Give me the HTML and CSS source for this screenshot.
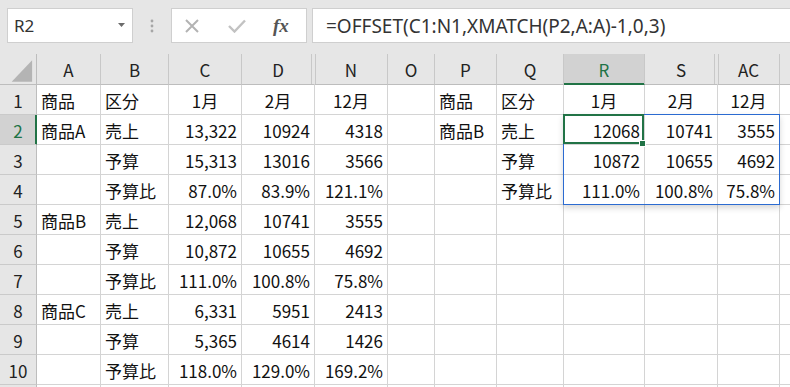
FILE: index.html
```html
<!DOCTYPE html>
<html lang="ja">
<head>
  <meta charset="UTF-8" />
  <title>OFFSET XMATCH</title>
  <link rel="stylesheet" href="styles.css">
</head>
<body>

  <!-- Formula bar -->
  <div class="toolbar">
    <div class="namebox">
      <span>R2</span>
      <svg class="caret" width="7" height="4" viewBox="0 0 7 4"><polygon points="0,0 7,0 3.5,4" fill="#6b6b6b"/></svg>
    </div>
    <svg class="grip" width="4" height="14" viewBox="0 0 4 14">
      <circle cx="2" cy="2" r="1.4" fill="#a6a6a6"/>
      <circle cx="2" cy="7" r="1.4" fill="#a6a6a6"/>
      <circle cx="2" cy="12" r="1.4" fill="#a6a6a6"/>
    </svg>
    <div class="fxbox">
      <svg width="16" height="14" viewBox="0 0 16 14"><path d="M2 1 L14 13 M14 1 L2 13" stroke="#b3b3b3" stroke-width="2" fill="none"/></svg>
      <svg width="18" height="14" viewBox="0 0 18 14"><path d="M1 7 L6.5 12.5 L17 1.5" stroke="#c2c2c2" stroke-width="2.4" fill="none"/></svg>
      <span class="fx">fx</span>
    </div>
    <div class="formula">=OFFSET(C1:N1,XMATCH(P2,A:A)-1,0,3)</div>
  </div>

  <!-- Sheet -->
  <div class="sheet">
    <div class="hd corner"><svg width="37" height="30" viewBox="0 0 37 30"><polygon points="33,6 33,28 12,28" fill="#b4b4b4"/></svg></div>
    <div class="hd">A</div>
    <div class="hd">B</div>
    <div class="hd">C</div>
    <div class="hd hid-l">D</div>
    <div class="hd hid-r">N</div>
    <div class="hd">O</div>
    <div class="hd">P</div>
    <div class="hd">Q</div>
    <div class="hd sel">R</div>
    <div class="hd hid-l">S</div>
    <div class="hd hid-r">AC</div>
    <div class="hd"></div>

    <!-- row 1 -->
    <div class="rh">1</div>
    <div class="c">商品</div>
    <div class="c">区分</div>
    <div class="c ctr">1月</div>
    <div class="c ctr">2月</div>
    <div class="c ctr">12月</div>
    <div class="c"></div>
    <div class="c">商品</div>
    <div class="c">区分</div>
    <div class="c ctr">1月</div>
    <div class="c ctr">2月</div>
    <div class="c ctr">12月</div>
    <div class="c"></div>

    <!-- row 2 -->
    <div class="rh sel">2</div>
    <div class="c">商品A</div>
    <div class="c">売上</div>
    <div class="c num">13,322</div>
    <div class="c num">10924</div>
    <div class="c num">4318</div>
    <div class="c"></div>
    <div class="c">商品B</div>
    <div class="c">売上</div>
    <div class="c num current">
      12068
      <!-- spill range and active cell -->
      <div class="spill"></div>
      <div class="active"></div>
      <div class="handle"></div>
    </div>
    <div class="c num">10741</div>
    <div class="c num">3555</div>
    <div class="c"></div>

    <!-- row 3 -->
    <div class="rh">3</div>
    <div class="c"></div>
    <div class="c">予算</div>
    <div class="c num">15,313</div>
    <div class="c num">13016</div>
    <div class="c num">3566</div>
    <div class="c"></div>
    <div class="c"></div>
    <div class="c">予算</div>
    <div class="c num">10872</div>
    <div class="c num">10655</div>
    <div class="c num">4692</div>
    <div class="c"></div>

    <!-- row 4 -->
    <div class="rh">4</div>
    <div class="c"></div>
    <div class="c">予算比</div>
    <div class="c num">87.0%</div>
    <div class="c num">83.9%</div>
    <div class="c num">121.1%</div>
    <div class="c"></div>
    <div class="c"></div>
    <div class="c">予算比</div>
    <div class="c num">111.0%</div>
    <div class="c num">100.8%</div>
    <div class="c num">75.8%</div>
    <div class="c"></div>

    <!-- row 5 -->
    <div class="rh">5</div>
    <div class="c">商品B</div>
    <div class="c">売上</div>
    <div class="c num">12,068</div>
    <div class="c num">10741</div>
    <div class="c num">3555</div>
    <div class="c"></div><div class="c"></div><div class="c"></div><div class="c"></div><div class="c"></div><div class="c"></div><div class="c"></div>

    <!-- row 6 -->
    <div class="rh">6</div>
    <div class="c"></div>
    <div class="c">予算</div>
    <div class="c num">10,872</div>
    <div class="c num">10655</div>
    <div class="c num">4692</div>
    <div class="c"></div><div class="c"></div><div class="c"></div><div class="c"></div><div class="c"></div><div class="c"></div><div class="c"></div>

    <!-- row 7 -->
    <div class="rh">7</div>
    <div class="c"></div>
    <div class="c">予算比</div>
    <div class="c num">111.0%</div>
    <div class="c num">100.8%</div>
    <div class="c num">75.8%</div>
    <div class="c"></div><div class="c"></div><div class="c"></div><div class="c"></div><div class="c"></div><div class="c"></div><div class="c"></div>

    <!-- row 8 -->
    <div class="rh">8</div>
    <div class="c">商品C</div>
    <div class="c">売上</div>
    <div class="c num">6,331</div>
    <div class="c num">5951</div>
    <div class="c num">2413</div>
    <div class="c"></div><div class="c"></div><div class="c"></div><div class="c"></div><div class="c"></div><div class="c"></div><div class="c"></div>

    <!-- row 9 -->
    <div class="rh">9</div>
    <div class="c"></div>
    <div class="c">予算</div>
    <div class="c num">5,365</div>
    <div class="c num">4614</div>
    <div class="c num">1426</div>
    <div class="c"></div><div class="c"></div><div class="c"></div><div class="c"></div><div class="c"></div><div class="c"></div><div class="c"></div>

    <!-- row 10 -->
    <div class="rh">10</div>
    <div class="c"></div>
    <div class="c">予算比</div>
    <div class="c num">118.0%</div>
    <div class="c num">129.0%</div>
    <div class="c num">169.2%</div>
    <div class="c"></div><div class="c"></div><div class="c"></div><div class="c"></div><div class="c"></div><div class="c"></div><div class="c"></div>

    <!-- row 11, only its top edge shows -->
    <div class="rh"></div>
    <div class="c"></div><div class="c"></div><div class="c"></div><div class="c"></div><div class="c"></div><div class="c"></div>
    <div class="c"></div><div class="c"></div><div class="c"></div><div class="c"></div><div class="c"></div><div class="c"></div>
  </div>

</body>
</html>
```

FILE: styles.css
```css
* {
  box-sizing: border-box;
}
body {
  margin: 0;
  width: 790px;
  height: 387px;
  overflow: hidden;
  background: #e6e6e6;
  font-family: 'Noto Sans CJK JP', sans-serif;
  color: #111;
}

/* Formula bar */
.toolbar {
  display: flex;
  align-items: center;
  height: 35px;
  padding-left: 7px;
  margin: 8px 0 11px 0;
}
.toolbar > * {
  flex: none;
}
.namebox {
  width: 126px;
  height: 35px;
  display: flex;
  align-items: center;
  justify-content: space-between;
  padding: 0 7px 0 6px;
  background: #fff;
  border: 1px solid #cfcfcf;
  font-family: 'Noto Sans', sans-serif;
  font-size: 17px;
  color: #333;
}
.caret {
  margin-top: -2px;
}
.grip {
  margin: 0 17px;
}
.fxbox {
  width: 136px;
  height: 35px;
  display: flex;
  align-items: center;
  gap: 28px;
  padding-left: 12px;
  background: #fff;
  border: 1px solid #cfcfcf;
}
.fx {
  font-family: 'Liberation Serif', serif;
  font-style: italic;
  font-weight: bold;
  font-size: 19px;
  color: #555;
  margin-left: -1px;
}
.formula {
  width: 500px;
  height: 35px;
  margin-left: 5px;
  display: flex;
  align-items: center;
  padding-left: 13px;
  background: #fff;
  border: 1px solid #cfcfcf;
  font-family: 'Noto Sans', sans-serif;
  font-size: 19px;
  color: #333;
  white-space: nowrap;
}

/* Sheet grid */
.sheet {
  display: grid;
  grid-template-columns: 37px 64px 68px 73px 73px 73px 47px 62px 67px 81px 73px 62px 73px;
  grid-template-rows: 31px repeat(11, 30px);
  font-size: 17px;
}
.hd {
  display: flex;
  align-items: center;
  justify-content: center;
  background: #e6e6e6;
  border-right: 1px solid #c8c8c8;
  border-bottom: 1px solid #bdbdbd;
  color: #222;
  padding-top: 1px;
}
.hd.corner {
  padding: 0;
  border-right-color: #bdbdbd;
}
.hd.hid-l {
  border-right-color: #e6e6e6;
  box-shadow: inset -2px 0 0 #e6e6e6, inset -3px 0 0 #c8c8c8;
}
.hd.hid-r {
  box-shadow: inset 1px 0 0 #c8c8c8;
}
.hd.sel {
  background: #d2d2d2;
  color: #217346;
  border-bottom-color: #217346;
  box-shadow: inset 0 -1px 0 #217346;
}
.rh {
  display: flex;
  align-items: center;
  justify-content: center;
  background: #e6e6e6;
  border-right: 1px solid #bdbdbd;
  border-bottom: 1px solid #cacaca;
  color: #222;
  padding-top: 1px;
}
.rh.sel {
  background: #d2d2d2;
  color: #217346;
  border-right-color: #217346;
  box-shadow: inset -1px 0 0 #217346;
}
.c {
  display: flex;
  align-items: center;
  padding: 1px 4px 0 4px;
  background: #fff;
  border-right: 1px solid #d4d4d4;
  border-bottom: 1px solid #d4d4d4;
  white-space: nowrap;
  overflow: hidden;
}
.c.num {
  justify-content: flex-end;
}
.c.ctr {
  justify-content: center;
}

/* Active cell R2 with its spill range R2:AC4 */
.c.current {
  position: relative;
  overflow: visible;
  z-index: 2;
}
.spill {
  position: absolute;
  left: -1px;
  top: -1px;
  width: 217px;
  height: 91px;
  border: 1px solid #2b6bd1;
  box-shadow: 0 3px 6px rgba(0, 0, 0, 0.16);
}
.active {
  position: absolute;
  left: -1px;
  top: -1px;
  right: 0;
  bottom: 0;
  border: 2px solid #217346;
}
.handle {
  position: absolute;
  right: -2px;
  bottom: -3px;
  width: 7px;
  height: 7px;
  background: #217346;
  border: 1px solid #fff;
}
```
